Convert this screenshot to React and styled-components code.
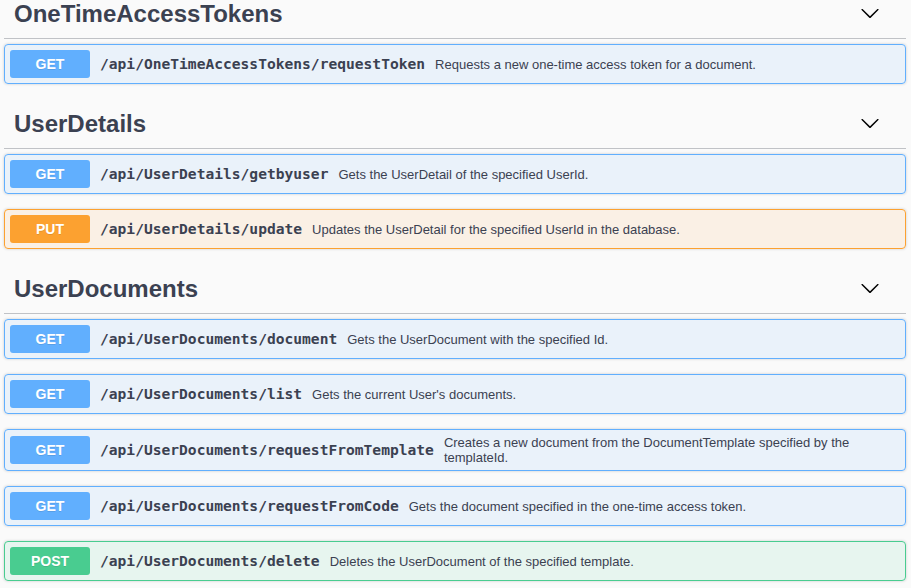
import React from "react";
import styled, { createGlobalStyle } from "styled-components";

const GlobalStyle = createGlobalStyle`
  html, body {
    margin: 0;
    padding: 0;
    background: #fafafa;
    overflow: hidden;
  }
  body {
    font-family: "Liberation Sans", Arial, sans-serif;
    color: #3b4151;
  }
`;

const METHOD_COLORS = {
  GET: { main: "#61affe", bg: "rgba(97,175,254,.1)" },
  PUT: { main: "#fca130", bg: "rgba(252,161,48,.1)" },
  POST: { main: "#49cc90", bg: "rgba(73,204,144,.1)" },
};

const Page = styled.div`
  width: 911px;
  height: 588px;
  overflow: hidden;
`;

const Wrapper = styled.div`
  margin-top: -11px;
  padding: 0 5px 0 4px;
`;

const TagSection = styled.section`
  display: flex;
  flex-direction: column;
`;

const TagHeader = styled.h3`
  display: flex;
  align-items: center;
  justify-content: space-between;
  height: 29px;
  margin: 0 0 5px;
  padding: 10px 26px 10px 10px;
  border-bottom: 1px solid rgba(59, 65, 81, 0.3);
  font-family: "Liberation Sans", Arial, sans-serif;
  font-size: 24px;
  font-weight: 700;
  color: #3b4151;
`;

const TagName = styled.span`
  line-height: 29px;
`;

const ExpandButton = styled.span`
  display: flex;
  align-items: center;
  width: 20px;
  height: 20px;
  margin-top: -2px;
  color: #000;
`;

const OpBlock = styled.div`
  margin: 0 0 15px;
  border: 1px solid ${(p) => METHOD_COLORS[p.$method].main};
  border-radius: 4px;
  background: ${(p) => METHOD_COLORS[p.$method].bg};
  box-shadow: 0 0 3px rgba(0, 0, 0, 0.19);
`;

const Summary = styled.div`
  display: flex;
  align-items: center;
  padding: 5px;
`;

const MethodBadge = styled.span`
  flex: 0 0 auto;
  min-width: 80px;
  padding: 6px 0;
  border-radius: 3px;
  background: ${(p) => METHOD_COLORS[p.$method].main};
  color: #fff;
  font-family: "Liberation Sans", Arial, sans-serif;
  font-size: 14px;
  font-weight: 700;
  line-height: 16px;
  text-align: center;
  text-shadow: 0 1px 0 rgba(0, 0, 0, 0.1);
`;

const Path = styled.span`
  flex: 0 0 auto;
  padding: 0 10px;
  font-family: "DejaVu Sans Mono", "Liberation Mono", monospace;
  font-size: 14.6px;
  font-weight: 700;
  line-height: 18px;
  color: #3b4151;
`;

const Description = styled.div`
  flex: 1 1 auto;
  padding-right: 40px;
  font-family: "Liberation Sans", Arial, sans-serif;
  font-size: 13px;
  line-height: 15px;
  color: #3b4151;
  word-break: break-word;
`;

const Chevron = () => (
  <svg width="20" height="20" viewBox="0 0 20 20" aria-hidden="true">
    <path
      fill="currentColor"
      d="M17.418 6.109c.272-.268.709-.268.979 0s.271.701 0 .969l-7.908 7.83c-.27.268-.707.268-.979 0l-7.908-7.830c-.27-.268-.27-.701 0-.969.271-.268.709-.268.979 0L10 13.25l7.418-7.141z"
    />
  </svg>
);

const tags = [
  {
    name: "OneTimeAccessTokens",
    ops: [
      {
        method: "GET",
        path: "/api/OneTimeAccessTokens/requestToken",
        desc: "Requests a new one-time access token for a document.",
      },
    ],
  },
  {
    name: "UserDetails",
    ops: [
      {
        method: "GET",
        path: "/api/UserDetails/getbyuser",
        desc: "Gets the UserDetail of the specified UserId.",
      },
      {
        method: "PUT",
        path: "/api/UserDetails/update",
        desc: "Updates the UserDetail for the specified UserId in the database.",
      },
    ],
  },
  {
    name: "UserDocuments",
    ops: [
      {
        method: "GET",
        path: "/api/UserDocuments/document",
        desc: "Gets the UserDocument with the specified Id.",
      },
      {
        method: "GET",
        path: "/api/UserDocuments/list",
        desc: "Gets the current User's documents.",
      },
      {
        method: "GET",
        path: "/api/UserDocuments/requestFromTemplate",
        desc: "Creates a new document from the DocumentTemplate specified by the templateId.",
      },
      {
        method: "GET",
        path: "/api/UserDocuments/requestFromCode",
        desc: "Gets the document specified in the one-time access token.",
      },
      {
        method: "POST",
        path: "/api/UserDocuments/delete",
        desc: "Deletes the UserDocument of the specified template.",
      },
    ],
  },
];

export default function App() {
  return (
    <Page>
      <GlobalStyle />
      <Wrapper>
        {tags.map((tag) => (
          <TagSection key={tag.name}>
            <TagHeader>
              <TagName>{tag.name}</TagName>
              <ExpandButton>
                <Chevron />
              </ExpandButton>
            </TagHeader>
            {tag.ops.map((op) => (
              <OpBlock key={op.path} $method={op.method}>
                <Summary>
                  <MethodBadge $method={op.method}>{op.method}</MethodBadge>
                  <Path>{op.path}</Path>
                  <Description>{op.desc}</Description>
                </Summary>
              </OpBlock>
            ))}
          </TagSection>
        ))}
      </Wrapper>
    </Page>
  );
}
